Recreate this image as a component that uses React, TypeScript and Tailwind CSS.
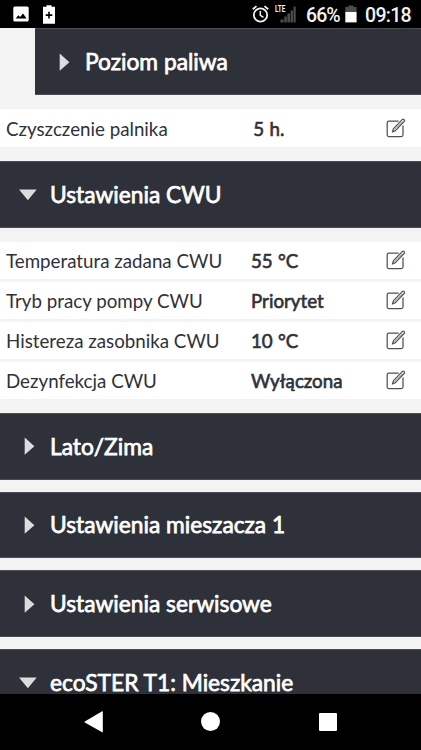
type Setting = { label: string; value: string };

const cwuSettings: Setting[] = [
  { label: "Temperatura zadana CWU", value: "55 °C" },
  { label: "Tryb pracy pompy CWU", value: "Priorytet" },
  { label: "Histereza zasobnika CWU", value: "10 °C" },
  { label: "Dezynfekcja CWU", value: "Wyłączona" },
];

const collapsed = ["Lato/Zima", "Ustawienia mieszacza 1", "Ustawienia serwisowe"];

function StatusBar() {
  return (
    <header className="flex h-[28.4px] shrink-0 items-center bg-black pr-[9px] pl-[13px] font-[Roboto] text-[19.5px] font-medium text-[#f2f2f2]">
      <svg width="16" height="16" viewBox="0 0 16 16">
        <rect x="0.3" y="0.5" width="15.4" height="15" rx="1.6" fill="#fff" />
        <path d="M2.7 12.6 5.4 9.2 7.1 11 10 7.4 13.6 12.6Z" fill="#000" />
      </svg>
      <svg className="ml-[14px]" width="12" height="19" viewBox="0 0 12 19">
        <path d="M3.5 0.3h5v1.5H12v16.9H0V1.8h3.5Z" fill="#fff" />
        <path d="M6 6.8v6.6M2.7 10.1h6.6" stroke="#000" strokeWidth="1.6" />
      </svg>
      <div className="flex-1" />
      <svg width="17" height="18" viewBox="0 0 17 18" fill="none" stroke="#f2f2f2">
        <circle cx="8.5" cy="10" r="6.7" strokeWidth="1.8" />
        <path d="M8.3 6v4.4l3.2 2" strokeWidth="1.5" />
        <path d="M0.8 4.2 4.5 1.1M16.2 4.2 12.5 1.1" strokeWidth="1.8" />
      </svg>
      <div className="relative ml-[6px] h-[18px] w-[22px]">
        <span className="absolute top-0 left-0 origin-top-left scale-x-[0.72] text-[9px] leading-[8px] font-bold">
          LTE
        </span>
        <svg className="absolute inset-0" width="22" height="18" viewBox="0 0 22 18">
          <path
            d="M5.5 14.5h3v3h-3zM9.2 11.5h2.6v6H9.2zM12.4 8.5H15v9h-2.6zM15.6 5.5h2.3v12h-2.3zM18.5 1.5h2.2v16h-2.2z"
            fill="#4c4c4c"
          />
        </svg>
      </div>
      <span className="ml-[9px] w-[36px] pt-[3px] leading-none tracking-[-0.9px]">66%</span>
      <svg className="ml-[3px]" width="12" height="18" viewBox="0 0 12 18">
        <path d="M3.3 0.5h5.2v1.6H11.6V7H0.3V2.1h3Z" fill="#4c4c4c" />
        <path d="M0.3 7h11.3v10.4H0.3Z" fill="#fff" />
      </svg>
      <span className="ml-[8px] w-[47px] pt-[3px] leading-none tracking-[-0.7px]">09:18</span>
    </header>
  );
}

function Arrow({ open }: { open?: boolean }) {
  return (
    <svg className="shrink-0" width="18" height="18" viewBox="0 0 18 18" fill="#dcdcdc">
      {open ? <path d="M0 4.6h17.7L8.9 15.2Z" /> : <path d="M5.7 0.6 15.4 9.2 5.7 17.8Z" />}
    </svg>
  );
}

function SectionHeader({ title, open }: { title: string; open?: boolean }) {
  return (
    <div className="flex h-[66.8px] shrink-0 items-center border-y border-[#4c4d55] bg-[#2f313a] pl-[19px]">
      <Arrow open={open} />
      <h2 className="-mt-[1px] ml-[12.8px] origin-left scale-x-[0.956] text-[23.8px] leading-[20px] whitespace-nowrap text-white [-webkit-text-stroke:0.75px_#fff]">
        {title}
      </h2>
    </div>
  );
}

function EditIcon() {
  return (
    <svg width="20" height="20" viewBox="0 0 20 20" fill="none" stroke="#4f5158" strokeWidth="1.25" strokeLinejoin="round">
      <path d="M12.6 3H3A1.8 1.8 0 0 0 1.2 4.8v12A1.8 1.8 0 0 0 3 18.6h12.2a1.8 1.8 0 0 0 1.8-1.8V7.6" />
      <path d="M6.4 14 7.5 10.6 16.2 1.6q1-.9 1.9 0t0 1.9L9.4 12.6Z" />
      <path d="M8.5 11.6 16.2 3.6" strokeWidth="0.5" />
    </svg>
  );
}

function SettingRow({ label, value, indent }: Setting & { indent?: boolean }) {
  return (
    <div className="flex h-[37.3px] shrink-0 items-center bg-white pl-[6px] text-[20px] leading-none whitespace-nowrap text-[#2f313a]">
      <span className="w-[244.5px] origin-left scale-x-[0.937]">{label}</span>
      <span
        className={`w-[135.5px] origin-left scale-x-[0.937] [-webkit-text-stroke:0.65px_#2f313a] [word-spacing:0.5px] ${indent ? "pl-[2.5px]" : ""}`}
      >
        {value}
      </span>
      <EditIcon />
    </div>
  );
}

function NavBar() {
  return (
    <nav className="flex h-[56.4px] shrink-0 items-center bg-black pl-[83.5px]">
      <svg width="20" height="24" viewBox="0 0 20 24" fill="#fff">
        <path d="M0.8 11.4 18.2 1.3q.6-.3.6.4v20.2q0 .7-.6.4L.8 12.4q-.8-.5 0-1Z" />
      </svg>
      <div className="ml-[97.5px] size-[19px] rounded-full bg-white" />
      <div className="ml-[98.5px] size-[18px] rounded-[1px] bg-white" />
    </nav>
  );
}

export default function App() {
  return (
    <div className="flex h-[750px] w-[421px] flex-col overflow-hidden bg-[#f3f3f3] font-[Lato,sans-serif]">
      <StatusBar />
      <main className="flex min-h-0 flex-1 flex-col overflow-hidden">
        <div className="pl-[35px]">
          <SectionHeader title="Poziom paliwa" />
        </div>
        <div className="py-[14.2px]">
          <SettingRow label="Czyszczenie palnika" value="5 h." indent />
        </div>
        <SectionHeader title="Ustawienia CWU" open />
        <div className="flex flex-col gap-[2.6px] py-[14.2px]">
          {cwuSettings.map((s) => (
            <SettingRow key={s.label} {...s} />
          ))}
        </div>
        <div className="flex flex-col gap-[11.8px]">
          {collapsed.map((title) => (
            <SectionHeader key={title} title={title} />
          ))}
          <SectionHeader title="ecoSTER T1: Mieszkanie" open />
        </div>
      </main>
      <NavBar />
    </div>
  );
}
